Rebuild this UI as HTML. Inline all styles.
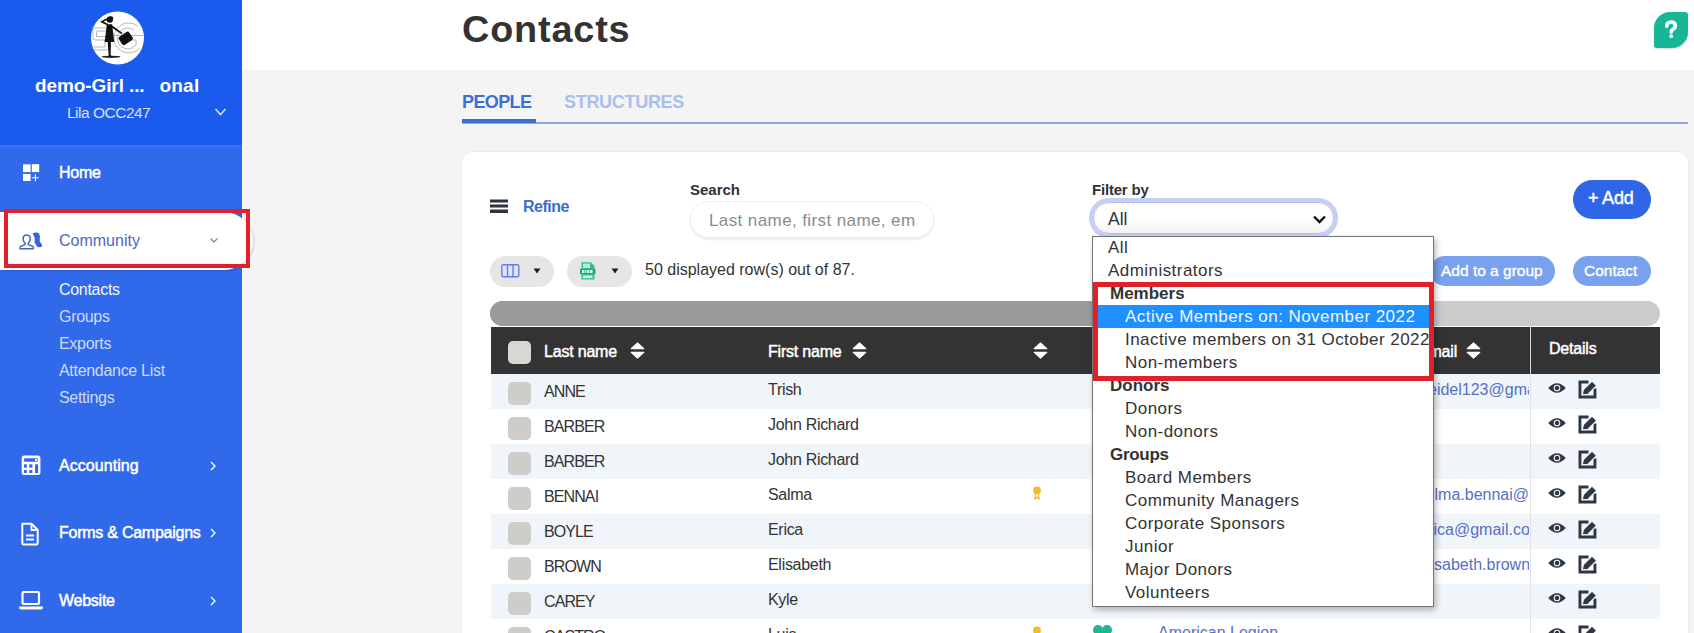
<!DOCTYPE html>
<html><head><meta charset="utf-8">
<style>
*{box-sizing:border-box;margin:0;padding:0}
html,body{width:1694px;height:633px;overflow:hidden;background:#f4f4f4;font-family:"Liberation Sans",sans-serif;color:#333}
.abs{position:absolute}
#side{position:absolute;left:0;top:0;width:242px;height:633px;background:#3169eb}
#sidetop{position:absolute;left:0;top:0;width:242px;height:145px;background:#1a5bee}
.logo{position:absolute;left:90px;top:12px;width:54px;height:52px;border-radius:50%;background:#fff;overflow:hidden}
.orgname{position:absolute;left:2px;width:232px;top:75px;text-align:center;color:#fff;font-weight:bold;font-size:19px;letter-spacing:0.2px}
.user{position:absolute;left:67px;top:104px;color:#d5e0fb;font-size:15.5px;letter-spacing:-0.5px}
.menu{position:absolute;left:59px;color:#fff;font-size:16px;-webkit-text-stroke:0.5px #fff;letter-spacing:-0.25px}
.sub{position:absolute;left:59px;color:#cddbfa;font-size:16px;letter-spacing:-0.3px}
.chev{position:absolute;color:#fff}
#header{position:absolute;left:242px;top:0;width:1452px;height:70px;background:#fff}
.title{position:absolute;left:462px;top:9px;font-size:36px;font-weight:bold;color:#333;letter-spacing:0.8px;transform:scaleX(1.05);transform-origin:0 0}
.tab{position:absolute;top:92px;font-size:18px;font-weight:bold;letter-spacing:-0.6px}
.card{position:absolute;left:462px;top:152px;width:1226px;height:520px;background:#fff;border-radius:10px;box-shadow:0 0 2px rgba(0,0,0,.12)}
.lbl{position:absolute;font-size:15px;font-weight:bold;color:#333}
.pill{position:absolute;border-radius:20px}
.row{position:absolute;left:491px;width:1169px;height:35px}
.cb{position:absolute;left:508px;width:23px;height:23px;border-radius:5px;background:#cfcdc9}
.cell{position:absolute;font-size:16px;color:#333;letter-spacing:-0.3px}
.dd{position:absolute;left:1092px;top:236px;width:342px;height:371px;background:#fff;border:1px solid #767676;box-shadow:2px 3px 6px rgba(0,0,0,.28)}
.opt{position:absolute;left:0;width:340px;height:23px;font-size:17px;line-height:23px;color:#333;letter-spacing:0.45px;white-space:nowrap;overflow:hidden}
.hd{font-size:16px;color:#fff;-webkit-text-stroke:0.45px #fff;letter-spacing:-0.2px}
.em{color:#5570c6;overflow:hidden;white-space:nowrap;letter-spacing:0}
.red{position:absolute;border:4px solid #e0202a}
</style></head><body>
<div id="side">
  <div id="sidetop"></div><div class="abs" style="left:0;top:145px;width:242px;height:5px;background:linear-gradient(#3b72f5,#3169eb)"></div>
  <svg class="abs" style="left:90px;top:11px" width="55" height="54" viewBox="0 0 55 54">
    <circle cx="27.5" cy="27" r="26.5" fill="#fff"/>
    <g fill="none" stroke="#9a9a9a" stroke-width="0.7">
      <path d="M17 17 H5 Q3 17 3 19 V27 Q3 29 5 29 H15 V36 H3"/>
      <path d="M17 20 H6.5 V25.5 H17 Q19 25.5 19 28 V37 Q19 39 17 39 H3"/>
      <path d="M48 15 A15 15 0 1 0 50 37"/>
      <path d="M44 19 A10.5 10.5 0 1 0 46 34 V29 H39"/>
      <path d="M24 24.5 H53"/>
    </g>
    <ellipse cx="21" cy="45.8" rx="9.5" ry="1.1" fill="#222"/>
    <circle cx="19.8" cy="8.6" r="3.2" fill="#111"/>
    <path d="M19 5.6 Q23 4.5 23.5 7.5 Q22 7 21 8 Z" fill="#111"/>
    <path d="M17.5 13.5 L11.5 10.8 L17 8.2" fill="none" stroke="#111" stroke-width="1.7" stroke-linejoin="round"/>
    <path d="M16.8 13.2 L22 13.2 L23.2 22 L24.2 31 L14.6 31 L15.8 22 Z" fill="#111"/>
    <path d="M21.5 14 L32.5 22 L31.6 23.3 L20.5 15.8 Z" fill="#111"/>
    <path d="M17.6 30 L21 30 L20.6 43.5 L21.6 45.6 L18.6 45.6 L18.6 43.5 Z" fill="#111"/>
    <rect x="29.5" y="22.5" width="12.5" height="9.8" rx="2" fill="#111" transform="rotate(-35 35.7 27.4)"/>
  </svg>
  <div class="orgname" style="left:35px;width:auto;letter-spacing:-0.1px">demo-Girl ...</div><div class="orgname" style="left:159.5px;width:auto">onal</div>
  <div class="user">Lila OCC247</div>
  <svg class="abs" style="left:214px;top:107px" width="13" height="10" viewBox="0 0 13 10"><path d="M1.5 2 L6.5 7.5 L11.5 2" fill="none" stroke="#cfdcff" stroke-width="1.6"/></svg>

  <svg class="abs" style="left:22px;top:163px" width="19" height="19" viewBox="0 0 19 19">
    <rect x="1" y="1.3" width="7.6" height="7.8" fill="#fff"/>
    <rect x="9.8" y="1.2" width="7.4" height="7.9" fill="#fff"/>
    <rect x="1" y="10.9" width="7.6" height="7.1" fill="#fff"/>
    <path d="M13.4 11.2 V18.2 M9.9 14.7 H16.9" stroke="#fff" stroke-width="1.1"/>
  </svg>
  <div class="menu" style="top:163.5px">Home</div>

  <div class="abs" style="left:0;top:212px;width:253px;height:58px;background:#fff;border-radius:0 29px 29px 0;box-shadow:1px 1px 3px rgba(0,0,0,.15)"></div>
  <svg class="abs" style="left:18px;top:231px" width="26" height="20" viewBox="0 0 26 20">
    <path d="M14.5 2.5 Q18 0.8 21 2.3 Q22.5 5 21.8 9.5 L21.5 10.3 L24 13.5 Q24.3 16.3 22 16.3 L19.5 16 L16.5 11.5 Q17.5 8 16 5 Z" fill="#3565dc"/>
    <path d="M8.7 3.9 C5.6 3.9 4.8 6.4 5.3 9 C5.7 10.9 6.6 11.9 7.2 12.4 L7 13.6 L3 15.2 C2 15.7 1.9 16.8 2 17.7 H15.4 C15.5 16.8 15.4 15.7 14.4 15.2 L10.4 13.6 L10.2 12.4 C10.8 11.9 11.7 10.9 12.1 9 C12.6 6.4 11.8 3.9 8.7 3.9 Z" fill="#fff" stroke="#4a62bd" stroke-width="1.5" stroke-linejoin="round"/>
  </svg>
  <div class="menu" style="top:232px;color:#4a68bd;-webkit-text-stroke:0;letter-spacing:0">Community</div>
  <svg class="abs" style="left:209px;top:236px" width="10" height="8" viewBox="0 0 10 8"><path d="M1.5 2.5 L5 6 L8.5 2.5" fill="none" stroke="#6f80b0" stroke-width="1.2"/></svg>

  <div class="sub" style="top:281px;color:#f3f7ff">Contacts</div>
  <div class="sub" style="top:308px">Groups</div>
  <div class="sub" style="top:335px">Exports</div>
  <div class="sub" style="top:362px">Attendance List</div>
  <div class="sub" style="top:389px">Settings</div>

  <svg class="abs" style="left:20px;top:455px" width="22" height="22" viewBox="0 0 22 22">
    <rect x="1.7" y="0.5" width="18.7" height="19.5" rx="2.5" fill="#fff"/>
    <rect x="4" y="3.2" width="13.7" height="3.6" rx="1" fill="#3169eb"/>
    <rect x="15" y="4" width="1.9" height="1.9" fill="#fff"/>
    <g fill="#3169eb"><rect x="4" y="9.3" width="2.9" height="3.3"/><rect x="9.3" y="9.3" width="3.1" height="3.3"/><rect x="4" y="15" width="2.9" height="3"/><rect x="9.3" y="15" width="3.1" height="3"/><rect x="15" y="9.3" width="3.1" height="8.7" rx="0.5"/></g>
  </svg>
  <div class="menu" style="top:457px;letter-spacing:0.05px">Accounting</div>
  <svg class="abs" style="left:209px;top:460px" width="8" height="12" viewBox="0 0 8 12"><path d="M2 2 L6 6 L2 10" fill="none" stroke="#fff" stroke-width="1.3"/></svg>

  <svg class="abs" style="left:20px;top:522px" width="20" height="24" viewBox="0 0 20 24">
    <path d="M2.3 1.8 H11.5 L17.7 8 V21.2 Q17.7 22.5 16.4 22.5 H3.6 Q2.3 22.5 2.3 21.2 Z" fill="none" stroke="#fff" stroke-width="2" stroke-linejoin="round"/>
    <path d="M11.5 1.8 V8 H17.7" fill="none" stroke="#fff" stroke-width="1.8"/>
    <rect x="6" y="12.5" width="8" height="2" fill="#fff"/><rect x="6" y="16.5" width="8" height="2" fill="#fff"/>
  </svg>
  <div class="menu" style="top:524px">Forms &amp; Campaigns</div>
  <svg class="abs" style="left:209px;top:527px" width="8" height="12" viewBox="0 0 8 12"><path d="M2 2 L6 6 L2 10" fill="none" stroke="#fff" stroke-width="1.3"/></svg>

  <svg class="abs" style="left:18px;top:590px" width="26" height="21" viewBox="0 0 26 21">
    <rect x="4.5" y="2" width="16.5" height="12" rx="1" fill="none" stroke="#fff" stroke-width="2.2"/>
    <path d="M1 16.5 H25 V17.5 Q25 19.5 23 19.5 H3 Q1 19.5 1 17.5 Z" fill="#fff"/>
  </svg>
  <div class="menu" style="top:592px">Website</div>
  <svg class="abs" style="left:209px;top:595px" width="8" height="12" viewBox="0 0 8 12"><path d="M2 2 L6 6 L2 10" fill="none" stroke="#fff" stroke-width="1.3"/></svg>
  <div class="red" style="left:4px;top:209px;width:246px;height:59px"></div>
</div>
<div id="header"></div>
<div class="title">Contacts</div>
<div class="tab" style="left:462px;color:#3a6fd8">PEOPLE</div>
<div class="tab" style="left:564px;color:#a9bfec;letter-spacing:-0.3px">STRUCTURES</div>
<div class="abs" style="left:462px;top:122px;width:1226px;height:2px;background:#8aa6e2"></div>
<div class="abs" style="left:462px;top:119px;width:74px;height:4px;background:#3a6fd8"></div>
<div class="card"></div>
<div class="abs" style="left:1654px;top:12px;width:34px;height:35.5px;background:#17b696;border-radius:16px 3px 16px 3px;box-shadow:0 1px 2px rgba(0,0,0,.15)"></div>
<svg class="abs" style="left:1664px;top:20px" width="14" height="19" viewBox="0 0 14 19"><path d="M2.8 6.2 Q2.6 2.2 7 2.2 Q11.3 2.2 11.3 5.8 Q11.3 8 8.8 9.3 Q7.2 10.1 7.2 12" fill="none" stroke="#f2fffc" stroke-width="3.7" stroke-linecap="round"/><circle cx="7.2" cy="16.2" r="1.9" fill="#f2fffc"/></svg>

<svg class="abs" style="left:490px;top:199px" width="18" height="15" viewBox="0 0 18 15"><rect x="0" y="0.5" width="18" height="3" fill="#2d3540"/><rect x="0" y="5.5" width="18" height="3" fill="#2d3540"/><rect x="0" y="10.5" width="18" height="3.5" fill="#2d3540"/></svg>
<div class="abs" style="left:523px;top:197.5px;font-size:16px;font-weight:bold;color:#3e6cc9;letter-spacing:-0.5px">Refine</div>

<div class="lbl" style="left:690px;top:181px">Search</div>
<div class="abs" style="left:690px;top:201px;width:244px;height:37px;border-radius:19px;background:#fff;border:1px solid #efefef;box-shadow:0 2px 2px rgba(0,0,0,.08)"></div>
<div class="abs" style="left:709px;top:210.5px;font-size:17px;color:#8c8c8c;letter-spacing:0.4px">Last name, first name, em</div>

<div class="lbl" style="left:1092px;top:181px;letter-spacing:-0.2px">Filter by</div>
<div class="abs" style="left:1092.5px;top:201.5px;width:241px;height:32.5px;border-radius:17px;background:linear-gradient(#fff 55%,#f2f2f2);border:1px solid #b3c0ea;box-shadow:0 0 0 4px #c4cff2"></div>
<div class="abs" style="left:1108px;top:209px;font-size:17.5px;color:#333">All</div>
<svg class="abs" style="left:1312px;top:214px" width="15" height="10" viewBox="0 0 15 10"><path d="M2 2.5 L7.5 8 L13 2.5" fill="none" stroke="#111" stroke-width="2.4"/></svg>

<div class="pill" style="left:1573px;top:180px;width:78px;height:39px;background:#2f66e6"></div>
<div class="abs" style="left:1588px;top:188px;font-size:18px;color:#fff;-webkit-text-stroke:0.45px #fff;letter-spacing:-0.2px">+ Add</div>

<div class="pill" style="left:490px;top:256px;width:64px;height:31px;background:#e6e6e6;border-radius:16px"></div>
<svg class="abs" style="left:501px;top:264px" width="19" height="14" viewBox="0 0 19 14"><rect x="0.8" y="0.8" width="17" height="12" rx="1.5" fill="#dde4ff" stroke="#6a7be0" stroke-width="1.4"/><path d="M6.5 1 V13 M12 1 V13" stroke="#6a7be0" stroke-width="1.4"/></svg>
<svg class="abs" style="left:533px;top:268px" width="8" height="6" viewBox="0 0 8 6"><path d="M0.5 0.5 H7.5 L4 5.5 Z" fill="#222"/></svg>
<div class="pill" style="left:567px;top:256px;width:65px;height:31px;background:#e6e6e6;border-radius:16px"></div>
<svg class="abs" style="left:580px;top:262px" width="16" height="18" viewBox="0 0 16 18"><path d="M1.5 0.3 H10.8 L14.5 4 V17.6 H1.5 Z" fill="#2fbf98"/><rect x="3" y="1.6" width="7" height="4.4" fill="#c9f2e4"/><path d="M3 3 H9 M3 4.6 H9" stroke="#8adcc2" stroke-width="0.6"/><rect x="0" y="6.8" width="15.5" height="5.4" fill="#27a583"/><g fill="#d9f7ec"><rect x="2" y="8" width="2.4" height="3"/><rect x="5.2" y="8" width="1" height="3"/><rect x="6.9" y="8" width="2.4" height="3"/><rect x="10" y="8" width="2.6" height="3"/></g><rect x="3" y="13.4" width="9.5" height="2.8" fill="#c9f2e4"/></svg>
<svg class="abs" style="left:611px;top:268px" width="8" height="6" viewBox="0 0 8 6"><path d="M0.5 0.5 H7.5 L4 5.5 Z" fill="#222"/></svg>
<div class="abs" style="left:645px;top:261px;font-size:16px;color:#333">50 displayed row(s) out of 87.</div>

<div class="pill" style="left:1430px;top:256px;width:125px;height:30px;background:#7aa1ef;border-radius:15px"></div>
<div class="abs" style="left:1441px;top:261.5px;font-size:15.5px;color:#fff;-webkit-text-stroke:0.35px #fff;letter-spacing:0px">Add to a group</div>
<div class="pill" style="left:1573px;top:256px;width:78px;height:30px;background:#7aa1ef;border-radius:15px"></div>
<div class="abs" style="left:1584px;top:261.5px;font-size:15.5px;color:#fff;-webkit-text-stroke:0.35px #fff;letter-spacing:0px">Contact</div>

<div class="abs" style="left:490px;top:301px;width:1170px;height:25px;border-radius:12.5px;background:#cbcbcb"></div>
<div class="abs" style="left:490px;top:301px;width:620px;height:25px;border-radius:12.5px 0 0 12.5px;background:#9b9b9b"></div>

<div class="abs" style="left:491px;top:327px;width:1169px;height:47px;background:#333"></div>
<div class="abs" style="left:1530px;top:327px;width:1px;height:306px;background:#dcdcdc"></div>
<div class="cb" style="top:341px;background:#d9d7d3"></div>
<div class="abs hd" style="left:544px;top:343px">Last name</div>
<div class="abs hd" style="left:768px;top:343px">First name</div>
<div class="abs hd" style="left:1418px;top:343px">Email</div>
<div class="abs hd" style="left:1549px;top:340px">Details</div>
<svg class="abs" style="left:630px;top:342px" width="15" height="17" viewBox="0 0 15 17"><path d="M7.5 0.8 L13.8 6.6 H1.2 Z M1.2 10.4 H13.8 L7.5 16.2 Z" fill="#fff" stroke="#fff" stroke-width="1.1" stroke-linejoin="round"/></svg>
<svg class="abs" style="left:852px;top:342px" width="15" height="17" viewBox="0 0 15 17"><path d="M7.5 0.8 L13.8 6.6 H1.2 Z M1.2 10.4 H13.8 L7.5 16.2 Z" fill="#fff" stroke="#fff" stroke-width="1.1" stroke-linejoin="round"/></svg>
<svg class="abs" style="left:1033px;top:342px" width="15" height="17" viewBox="0 0 15 17"><path d="M7.5 0.8 L13.8 6.6 H1.2 Z M1.2 10.4 H13.8 L7.5 16.2 Z" fill="#fff" stroke="#fff" stroke-width="1.1" stroke-linejoin="round"/></svg>
<svg class="abs" style="left:1466px;top:342px" width="15" height="17" viewBox="0 0 15 17"><path d="M7.5 0.8 L13.8 6.6 H1.2 Z M1.2 10.4 H13.8 L7.5 16.2 Z" fill="#fff" stroke="#fff" stroke-width="1.1" stroke-linejoin="round"/></svg>
<div class="row" style="top:373.5px;background:#f0f5fa"></div>
<div class="cb" style="top:381.5px"></div>
<div class="cell" style="left:544px;top:383.0px;letter-spacing:-0.9px">ANNE</div>
<div class="cell" style="left:768px;top:380.5px">Trish</div>
<div class="cell em" style="left:1428px;width:101px;top:381.0px">eidel123@gmail.com</div>
<svg class="abs" style="left:1548px;top:382px" width="18" height="12" viewBox="0 0 18 12"><path d="M0.2 6 Q9 -3.6 17.8 6 Q9 15.6 0.2 6 Z" fill="#2f3744"/><circle cx="9" cy="6" r="2.8" fill="none" stroke="#f0f5fa" stroke-width="1.1"/><circle cx="9" cy="6" r="1.3" fill="#2f3744"/></svg>
<svg class="abs" style="left:1577.5px;top:379.5px" width="19" height="19" viewBox="0 0 19 19"><path d="M10.5 1.95 H1.95 V16.95 H16.95 V8.5" fill="none" stroke="#2f3744" stroke-width="2.9"/><path d="M4.3 14.7 L5.4 9.6 L14 1 L18.6 5.6 L10 14.2 Z" fill="#2f3744" stroke="#f0f5fa" stroke-width="1.1"/></svg>
<div class="row" style="top:408.5px;background:#ffffff"></div>
<div class="cb" style="top:416.5px"></div>
<div class="cell" style="left:544px;top:418.0px;letter-spacing:-0.9px">BARBER</div>
<div class="cell" style="left:768px;top:415.5px">John Richard</div>
<svg class="abs" style="left:1548px;top:417px" width="18" height="12" viewBox="0 0 18 12"><path d="M0.2 6 Q9 -3.6 17.8 6 Q9 15.6 0.2 6 Z" fill="#2f3744"/><circle cx="9" cy="6" r="2.8" fill="none" stroke="#f0f5fa" stroke-width="1.1"/><circle cx="9" cy="6" r="1.3" fill="#2f3744"/></svg>
<svg class="abs" style="left:1577.5px;top:414.5px" width="19" height="19" viewBox="0 0 19 19"><path d="M10.5 1.95 H1.95 V16.95 H16.95 V8.5" fill="none" stroke="#2f3744" stroke-width="2.9"/><path d="M4.3 14.7 L5.4 9.6 L14 1 L18.6 5.6 L10 14.2 Z" fill="#2f3744" stroke="#f0f5fa" stroke-width="1.1"/></svg>
<div class="row" style="top:443.5px;background:#f0f5fa"></div>
<div class="cb" style="top:451.5px"></div>
<div class="cell" style="left:544px;top:453.0px;letter-spacing:-0.9px">BARBER</div>
<div class="cell" style="left:768px;top:450.5px">John Richard</div>
<svg class="abs" style="left:1548px;top:452px" width="18" height="12" viewBox="0 0 18 12"><path d="M0.2 6 Q9 -3.6 17.8 6 Q9 15.6 0.2 6 Z" fill="#2f3744"/><circle cx="9" cy="6" r="2.8" fill="none" stroke="#f0f5fa" stroke-width="1.1"/><circle cx="9" cy="6" r="1.3" fill="#2f3744"/></svg>
<svg class="abs" style="left:1577.5px;top:449.5px" width="19" height="19" viewBox="0 0 19 19"><path d="M10.5 1.95 H1.95 V16.95 H16.95 V8.5" fill="none" stroke="#2f3744" stroke-width="2.9"/><path d="M4.3 14.7 L5.4 9.6 L14 1 L18.6 5.6 L10 14.2 Z" fill="#2f3744" stroke="#f0f5fa" stroke-width="1.1"/></svg>
<div class="row" style="top:478.5px;background:#ffffff"></div>
<div class="cb" style="top:486.5px"></div>
<div class="cell" style="left:544px;top:488.0px;letter-spacing:-0.9px">BENNAI</div>
<div class="cell" style="left:768px;top:485.5px">Salma</div>
<div class="cell em" style="left:1434.5px;width:94.5px;top:486.0px">lma.bennai@gmail.com</div>
<svg class="abs" style="left:1031px;top:484px" width="12" height="16" viewBox="0 0 12 16"><path d="M4.6 8 L4 15 L6 13 L8 15 L7.4 8" fill="none" stroke="#f0b429" stroke-width="1.1"/><circle cx="6" cy="6.5" r="3.9" fill="#f5ba2c"/></svg>
<svg class="abs" style="left:1548px;top:487px" width="18" height="12" viewBox="0 0 18 12"><path d="M0.2 6 Q9 -3.6 17.8 6 Q9 15.6 0.2 6 Z" fill="#2f3744"/><circle cx="9" cy="6" r="2.8" fill="none" stroke="#f0f5fa" stroke-width="1.1"/><circle cx="9" cy="6" r="1.3" fill="#2f3744"/></svg>
<svg class="abs" style="left:1577.5px;top:484.5px" width="19" height="19" viewBox="0 0 19 19"><path d="M10.5 1.95 H1.95 V16.95 H16.95 V8.5" fill="none" stroke="#2f3744" stroke-width="2.9"/><path d="M4.3 14.7 L5.4 9.6 L14 1 L18.6 5.6 L10 14.2 Z" fill="#2f3744" stroke="#f0f5fa" stroke-width="1.1"/></svg>
<div class="row" style="top:513.5px;background:#f0f5fa"></div>
<div class="cb" style="top:521.5px"></div>
<div class="cell" style="left:544px;top:523.0px;letter-spacing:-0.9px">BOYLE</div>
<div class="cell" style="left:768px;top:520.5px">Erica</div>
<div class="cell em" style="left:1433.5px;width:95.5px;top:521.0px">ica@gmail.com</div>
<svg class="abs" style="left:1548px;top:522px" width="18" height="12" viewBox="0 0 18 12"><path d="M0.2 6 Q9 -3.6 17.8 6 Q9 15.6 0.2 6 Z" fill="#2f3744"/><circle cx="9" cy="6" r="2.8" fill="none" stroke="#f0f5fa" stroke-width="1.1"/><circle cx="9" cy="6" r="1.3" fill="#2f3744"/></svg>
<svg class="abs" style="left:1577.5px;top:519.5px" width="19" height="19" viewBox="0 0 19 19"><path d="M10.5 1.95 H1.95 V16.95 H16.95 V8.5" fill="none" stroke="#2f3744" stroke-width="2.9"/><path d="M4.3 14.7 L5.4 9.6 L14 1 L18.6 5.6 L10 14.2 Z" fill="#2f3744" stroke="#f0f5fa" stroke-width="1.1"/></svg>
<div class="row" style="top:548.5px;background:#ffffff"></div>
<div class="cb" style="top:556.5px"></div>
<div class="cell" style="left:544px;top:558.0px;letter-spacing:-0.9px">BROWN</div>
<div class="cell" style="left:768px;top:555.5px">Elisabeth</div>
<div class="cell em" style="left:1434px;width:95px;top:556.0px">sabeth.brown@gmail.com</div>
<svg class="abs" style="left:1548px;top:557px" width="18" height="12" viewBox="0 0 18 12"><path d="M0.2 6 Q9 -3.6 17.8 6 Q9 15.6 0.2 6 Z" fill="#2f3744"/><circle cx="9" cy="6" r="2.8" fill="none" stroke="#f0f5fa" stroke-width="1.1"/><circle cx="9" cy="6" r="1.3" fill="#2f3744"/></svg>
<svg class="abs" style="left:1577.5px;top:554.5px" width="19" height="19" viewBox="0 0 19 19"><path d="M10.5 1.95 H1.95 V16.95 H16.95 V8.5" fill="none" stroke="#2f3744" stroke-width="2.9"/><path d="M4.3 14.7 L5.4 9.6 L14 1 L18.6 5.6 L10 14.2 Z" fill="#2f3744" stroke="#f0f5fa" stroke-width="1.1"/></svg>
<div class="row" style="top:583.5px;background:#f0f5fa"></div>
<div class="cb" style="top:591.5px"></div>
<div class="cell" style="left:544px;top:593.0px;letter-spacing:-0.9px">CAREY</div>
<div class="cell" style="left:768px;top:590.5px">Kyle</div>
<svg class="abs" style="left:1548px;top:592px" width="18" height="12" viewBox="0 0 18 12"><path d="M0.2 6 Q9 -3.6 17.8 6 Q9 15.6 0.2 6 Z" fill="#2f3744"/><circle cx="9" cy="6" r="2.8" fill="none" stroke="#f0f5fa" stroke-width="1.1"/><circle cx="9" cy="6" r="1.3" fill="#2f3744"/></svg>
<svg class="abs" style="left:1577.5px;top:589.5px" width="19" height="19" viewBox="0 0 19 19"><path d="M10.5 1.95 H1.95 V16.95 H16.95 V8.5" fill="none" stroke="#2f3744" stroke-width="2.9"/><path d="M4.3 14.7 L5.4 9.6 L14 1 L18.6 5.6 L10 14.2 Z" fill="#2f3744" stroke="#f0f5fa" stroke-width="1.1"/></svg>
<div class="row" style="top:618.5px;background:#ffffff"></div>
<div class="cb" style="top:626.5px"></div>
<div class="cell" style="left:544px;top:628.0px;letter-spacing:-0.9px">CASTRO</div>
<div class="cell" style="left:768px;top:625.5px">Luis</div>
<svg class="abs" style="left:1031px;top:624px" width="12" height="16" viewBox="0 0 12 16"><path d="M4.6 8 L4 15 L6 13 L8 15 L7.4 8" fill="none" stroke="#f0b429" stroke-width="1.1"/><circle cx="6" cy="6.5" r="3.9" fill="#f5ba2c"/></svg>
<svg class="abs" style="left:1548px;top:627px" width="18" height="12" viewBox="0 0 18 12"><path d="M0.2 6 Q9 -3.6 17.8 6 Q9 15.6 0.2 6 Z" fill="#2f3744"/><circle cx="9" cy="6" r="2.8" fill="none" stroke="#f0f5fa" stroke-width="1.1"/><circle cx="9" cy="6" r="1.3" fill="#2f3744"/></svg>
<svg class="abs" style="left:1577.5px;top:624.5px" width="19" height="19" viewBox="0 0 19 19"><path d="M10.5 1.95 H1.95 V16.95 H16.95 V8.5" fill="none" stroke="#2f3744" stroke-width="2.9"/><path d="M4.3 14.7 L5.4 9.6 L14 1 L18.6 5.6 L10 14.2 Z" fill="#2f3744" stroke="#f0f5fa" stroke-width="1.1"/></svg>
<svg class="abs" style="left:1092.5px;top:624.5px" width="19" height="16" viewBox="0 0 19 16"><circle cx="5" cy="5" r="5" fill="#1db592"/><circle cx="14" cy="5" r="5" fill="#1db592"/><path d="M0.4 6.8 H18.6 L9.5 15.5 Z" fill="#1db592"/></svg>
<div class="cell em" style="left:1158px;width:200px;top:624px">American Legion</div>
<div class="abs" style="left:1530px;top:374px;width:1px;height:260px;background:#e2e2e2"></div>
<div class="dd">
<div class="opt" style="top:-0.7px;padding-left:15px">All</div>
<div class="opt" style="top:22.3px;padding-left:15px">Administrators</div>
<div class="opt" style="top:45.3px;padding-left:17px;font-weight:bold;letter-spacing:0">Members</div>
<div class="opt" style="top:68.3px;padding-left:32px;background:#1e90ff;color:#eef7ff">Active Members on: November 2022</div>
<div class="opt" style="top:91.3px;padding-left:32px">Inactive members on 31 October 2022</div>
<div class="opt" style="top:114.3px;padding-left:32px">Non-members</div>
<div class="opt" style="top:137.3px;padding-left:17px;font-weight:bold;letter-spacing:0">Donors</div>
<div class="opt" style="top:160.3px;padding-left:32px">Donors</div>
<div class="opt" style="top:183.3px;padding-left:32px">Non-donors</div>
<div class="opt" style="top:206.3px;padding-left:17px;font-weight:bold;letter-spacing:-0.3px">Groups</div>
<div class="opt" style="top:229.3px;padding-left:32px">Board Members</div>
<div class="opt" style="top:252.3px;padding-left:32px">Community Managers</div>
<div class="opt" style="top:275.3px;padding-left:32px">Corporate Sponsors</div>
<div class="opt" style="top:298.3px;padding-left:32px">Junior</div>
<div class="opt" style="top:321.3px;padding-left:32px">Major Donors</div>
<div class="opt" style="top:344.3px;padding-left:32px">Volunteers</div>
</div>
<div class="red" style="left:1093px;top:282px;width:341px;height:99px;border-width:5px"></div>
</body></html>
